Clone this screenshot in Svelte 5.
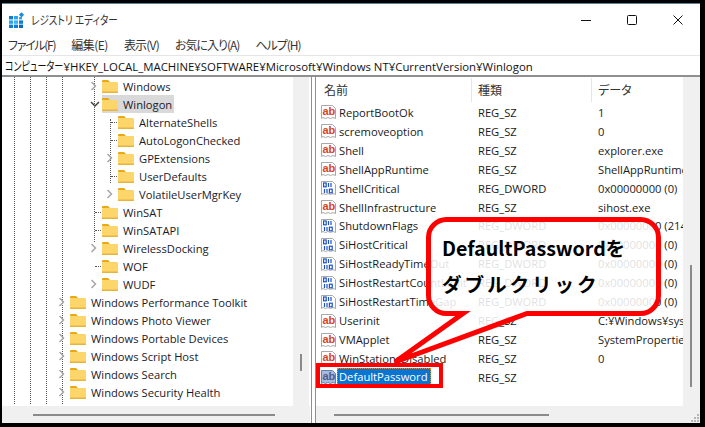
<script>
  // track = letter-spacing per item, Meiryo UI kana are narrow
  const menu = [
    { label: "ファイル(F)", track: -1.3 },
    { label: "編集(E)", track: -0.5 },
    { label: "表示(V)", track: -0.8 },
    { label: "お気に入り(A)", track: -1 },
    { label: "ヘルプ(H)", track: -1 }
  ];

  const tree = [
    { level: 2, name: "Windows", arrow: "right" },
    { level: 2, name: "Winlogon", arrow: "down", selected: true },
    { level: 3, name: "AlternateShells", dots: true },
    { level: 3, name: "AutoLogonChecked", dots: true },
    { level: 3, name: "GPExtensions", arrow: "right" },
    { level: 3, name: "UserDefaults", dots: true },
    { level: 3, name: "VolatileUserMgrKey", arrow: "right" },
    { level: 2, name: "WinSAT", dots: true },
    { level: 2, name: "WinSATAPI", dots: true },
    { level: 2, name: "WirelessDocking", arrow: "right" },
    { level: 2, name: "WOF", dots: true },
    { level: 2, name: "WUDF", arrow: "right" },
    { level: 1, name: "Windows Performance Toolkit", arrow: "right" },
    { level: 1, name: "Windows Photo Viewer", arrow: "right" },
    { level: 1, name: "Windows Portable Devices", arrow: "right" },
    { level: 1, name: "Windows Script Host", arrow: "right" },
    { level: 1, name: "Windows Search", arrow: "right" },
    { level: 1, name: "Windows Security Health", arrow: "right" }
  ];

  const values = [
    ["ReportBootOk", "REG_SZ", "1", "ab"],
    ["scremoveoption", "REG_SZ", "0", "ab"],
    ["Shell", "REG_SZ", "explorer.exe", "ab"],
    ["ShellAppRuntime", "REG_SZ", "ShellAppRuntime.exe", "ab"],
    ["ShellCritical", "REG_DWORD", "0x00000000 (0)", "bin"],
    ["ShellInfrastructure", "REG_SZ", "sihost.exe", "ab"],
    ["ShutdownFlags", "REG_DWORD", "0x00000000 (214", "bin"],
    ["SiHostCritical", "REG_DWORD", "0x00000000 (0)", "bin"],
    ["SiHostReadyTimeOut", "REG_DWORD", "0x00000000 (0)", "bin"],
    ["SiHostRestartCountLimit", "REG_DWORD", "0x00000000 (0)", "bin"],
    ["SiHostRestartTimeGap", "REG_DWORD", "0x00000000 (0)", "bin"],
    ["Userinit", "REG_SZ", "C:¥Windows¥system32", "ab"],
    ["VMApplet", "REG_SZ", "SystemPropertiesPerf", "ab"],
    ["WinStationsDisabled", "REG_SZ", "0", "ab"],
    ["DefaultPassword", "REG_SZ", "", "ab", true]
  ];
</script>

<div class="frame">
  <div class="window">
    <header class="titlebar">
      <svg class="appicon" width="16" height="16" viewBox="0 0 16 16">
        <g>
          <rect x="0" y="4" width="4" height="3.4" fill="#0e7fd0" />
          <rect x="5" y="4" width="4" height="3.4" fill="#2aa4ea" />
          <rect x="10" y="5" width="3" height="2.4" fill="#2aa4ea" />
          <rect x="0" y="8.4" width="4" height="3.4" fill="#2aa4ea" />
          <rect x="5" y="8.4" width="4" height="3.4" fill="#38b4f0" />
          <rect x="10" y="8.4" width="4" height="3.4" fill="#0e7fd0" />
          <rect x="0" y="12.6" width="4" height="3.4" fill="#0e7fd0" />
          <rect x="5" y="12.6" width="4" height="3.4" fill="#0e7fd0" />
          <rect x="10" y="12.6" width="4" height="3.4" fill="#0a6cb8" />
        </g>
        <path d="M12.5 0.2l2.6 2.6-2.6 2.6-2.6-2.6z" fill="#1a8fd8" />
      </svg>
      <span class="apptitle">レジストリ エディター</span>
      <div class="controls">
        <svg width="12" height="12" viewBox="0 0 12 12"><path d="M1 6.5h10" stroke="#111" fill="none" /></svg>
        <svg width="12" height="12" viewBox="0 0 12 12"><rect x="1.5" y="1.5" width="9" height="9" rx="1" stroke="#111" fill="none" /></svg>
        <svg width="12" height="12" viewBox="0 0 12 12"><path d="M1.5 1.5l9 9M10.5 1.5l-9 9" stroke="#111" fill="none" /></svg>
      </div>
    </header>

    <nav class="menu">
      {#each menu as item}
        <span style="letter-spacing: {item.track}px">{item.label}</span>
      {/each}
    </nav>

    <div class="address"><span class="ja">コンピューター</span>¥HKEY_LOCAL_MACHINE¥SOFTWARE¥Microsoft¥Windows NT¥CurrentVersion¥Winlogon</div>

    <div class="panes">
      <section class="treepane">
        <div class="treeview">
          <div class="guides">
            <i></i><i></i><i></i><i></i><i></i><i></i>
          </div>
          <ul class="tree">
            {#each tree as node}
              <li class="node" class:l2={node.level === 2} class:l3={node.level === 3}>
                <span class="twist">
                  {#if node.arrow === "right"}
                    <svg width="8" height="10" viewBox="0 0 8 10"><path d="M1.5 1l4 4-4 4" stroke="#a6a6a6" stroke-width="1.5" fill="none" /></svg>
                  {:else if node.arrow === "down"}
                    <svg width="10" height="8" viewBox="0 0 10 8"><path d="M1 2l4 4 4-4" stroke="#404040" stroke-width="1.5" fill="none" /></svg>
                  {:else if node.dots}
                    <b class="dotline"></b>
                  {/if}
                </span>
                <span class="label" class:selected={node.selected}>
                  <svg class="folder" width="16" height="14" viewBox="0 0 16 14">
                    <path d="M0 2a1 1 0 0 1 1-1h5l2 2H0z" fill="#e9a80f" />
                    <rect x="0" y="3" width="16" height="11" rx="1" fill="#fcd56b" />
                    <rect x="0" y="12.5" width="16" height="1.5" fill="#e8b53c" />
                  </svg>
                  <span class="text">{node.name}</span>
                </span>
              </li>
            {/each}
          </ul>
          <div class="vscroll"><b></b></div>
        </div>
        <div class="hscroll tree-h"><b></b></div>
      </section>

      <section class="listpane">
        <div class="listview">
          <div class="head">
            <span>名前</span><span>種類</span><span>データ</span>
          </div>
          {#each values as v}
            <div class="row">
              <span class="cname">
                <svg class="ficon" class:dim={v[4]} width="16" height="16" viewBox="0 0 16 16">
                  <path class="page" d="M0.5 1.5h11l3 3v10l-2.500-1-2.500 1-2.500-1-2.500 1-2.500-1-1.500 1z" />
                  {#if v[3] === "ab"}
                    <text x="1.500" y="10.500" class="abtext">ab</text>
                  {:else}
                    <g fill="none" stroke="#1c50c8" stroke-width="1.200">
                      <rect x="2.600" y="3" width="2.600" height="3.800" />
                      <path d="M7.500 3v4M10 3v4" />
                      <path d="M3.500 9v4M6 9v4" />
                      <rect x="8.400" y="9.200" width="2.800" height="3.600" />
                    </g>
                  {/if}
                </svg>
                <span class="vname" class:active={v[4]}>{v[0]}</span>
              </span>
              <span class="ctype">{v[1]}</span>
              <span class="cdata">{v[2]}</span>
            </div>
          {/each}
          <div class="vscroll list-v"><b></b></div>
        </div>
        <div class="hscroll list-h"><b></b><svg class="grip" width="10" height="10" viewBox="0 0 10 10" fill="#b5b5b5"><rect x="7" y="1" width="2" height="2"/><rect x="4" y="4" width="2" height="2"/><rect x="7" y="4" width="2" height="2"/><rect x="1" y="7" width="2" height="2"/><rect x="4" y="7" width="2" height="2"/><rect x="7" y="7" width="2" height="2"/></svg></div>
      </section>
    </div>

    <!-- annotation drawn over the screenshot -->
    <svg class="callout" width="705" height="427" viewBox="0 0 705 427">
      <path d="M446.500 219.500H640.500a18 18 0 0 1 18 18V295.500a18 18 0 0 1-18 18H527L395 362L463 313.500H446.500a18 18 0 0 1-18-18V237.500a18 18 0 0 1 18-18Z" fill="#fff" fill-opacity="0.86" stroke="#ff0000" stroke-width="5" />
    </svg>
    <div class="bubble">
      <p>DefaultPasswordを</p>
      <p class="kana">ダブルクリック</p>
    </div>
    <div class="redbox"></div>
  </div>
</div>

<style>
  :global(body) {
    margin: 0;
    background: #000;
  }

  .frame {
    width: 705px;
    height: 427px;
    box-sizing: border-box;
    padding: 3px 5px 5px 2px;
    background: #000;
    overflow: hidden;
  }

  .window {
    position: relative;
    height: 100%;
    display: flex;
    flex-direction: column;
    background: #fff;
    font-family: "Noto Sans CJK JP", "Noto Sans", sans-serif;
    font-feature-settings: "palt";
    font-size: 12px;
    color: #1a1a1a;
    border-top: 1px solid #5f7f92;
  }

  .titlebar {
    height: 31px;
    flex: none;
    display: flex;
    align-items: center;
    padding: 0 0 0 7px;
    box-sizing: border-box;
  }

  .appicon {
    margin-right: 6px;
  }

  .apptitle {
    font-size: 12px;
    color: #333;
    transform: scaleX(0.8);
    transform-origin: left center;
  }

  .controls {
    margin-left: auto;
    display: flex;
    gap: 34px;
    padding-right: 16px;
    align-items: center;
  }

  .controls svg {
    display: block;
  }

  .menu {
    flex: none;
    height: 20px;
    display: flex;
    gap: 16px;
    align-items: center;
    padding: 0 0 1px 6px;
    box-sizing: border-box;
    color: #333;
  }

  .address {
    flex: none;
    height: 20px;
    line-height: 20px;
    box-sizing: border-box;
    border-top: 1px solid #e6e6e6;
    padding-left: 3px;
    font-family: "Open Sans", "Noto Sans CJK JP", sans-serif;
    font-size: 11.400px;
    white-space: nowrap;
    overflow: hidden;
    color: #111;
  }

  .address .ja {
    display: inline-block;
    font-family: "Noto Sans CJK JP", sans-serif;
    font-size: 12px;
    transform: scaleX(0.75);
    transform-origin: left center;
    margin-right: -19px;
  }

  .panes {
    flex: 1;
    min-height: 0;
    display: flex;
    border-top: 2px solid #8f8f8f;
  }

  .treepane {
    width: 309px;
    flex: none;
    display: flex;
    flex-direction: column;
    border-right: 1px solid #8f8f8f;
  }

  .listpane {
    flex: 1;
    min-width: 0;
    display: flex;
    flex-direction: column;
    margin-left: 3px;
    border-left: 1px solid #8f8f8f;
  }

  .treeview,
  .listview {
    position: relative;
    flex: 1;
    min-height: 0;
    overflow: hidden;
    background: #fff;
  }

  .guides i {
    position: absolute;
    top: 0;
    bottom: 2px;
    border-left: 1px dotted #555;
  }

  .guides i:nth-child(1) { left: 12px; }
  .guides i:nth-child(2) { left: 28px; }
  .guides i:nth-child(3) { left: 44px; }
  .guides i:nth-child(4) { left: 60px; }
  .guides i:nth-child(5) { left: 92px; bottom: auto; height: 165px; }
  .guides i:nth-child(6) { left: 108px; top: 42px; bottom: auto; height: 64px; }

  .tree {
    position: relative;
    list-style: none;
    margin: 0;
    padding: 0 0 0 56px;
    font-family: "Open Sans", "Noto Sans", sans-serif;
    font-size: 11.200px;
  }

  .node {
    height: 18px;
    display: flex;
    align-items: center;
  }

  .node.l2 { padding-left: 32px; }
  .node.l3 { padding-left: 48px; }

  .twist {
    width: 11px;
    margin-right: 1px;
    flex: none;
    display: flex;
    align-items: center;
  }

  .twist svg {
    display: block;
  }

  .dotline {
    display: block;
    width: 6px;
    margin-left: 5px;
    border-top: 1px dotted #555;
  }

  .label {
    display: flex;
    align-items: center;
    gap: 5px;
    height: 18px;
    padding-right: 2px;
  }

  .label.selected {
    background: #d9d9d9;
  }

  .folder {
    flex: none;
  }

  .text {
    white-space: nowrap;
    color: #1a1a2a;
  }

  .treeview .vscroll {
    position: absolute;
    top: 0;
    right: 2px;
    bottom: 0;
    width: 16px;
    background: #f0f0f0;
  }

  .vscroll b {
    position: absolute;
    left: 7px;
    width: 2px;
    background: #8a8a8a;
  }

  .treeview .vscroll b {
    top: 277px;
    height: 17px;
  }

  .hscroll {
    position: relative;
    flex: none;
    height: 17px;
    background: #f0f0f0;
  }

  .hscroll b {
    position: absolute;
    top: 8px;
    height: 2px;
    background: #8a8a8a;
  }

  .tree-h {
    margin-right: 1px;
  }

  .tree-h b {
    left: 31px;
    width: 242px;
  }

  .list-h b {
    left: 18px;
    width: 215px;
  }

  .grip {
    position: absolute;
    right: 0;
    bottom: 0;
  }

  .head {
    display: grid;
    grid-template-columns: 155px 120px 1fr;
    height: 26px;
    align-items: center;
    color: #333;
  }

  .head span {
    padding-left: 6px;
    height: 24px;
    line-height: 24px;
    border-left: 1px solid #e5e5e5;
  }

  .head span:first-child {
    border-left: 0;
    padding-left: 8px;
  }

  .row {
    display: grid;
    grid-template-columns: 155px 120px 1fr;
    height: 18.930px;
    align-items: center;
    font-family: "Open Sans", "Noto Sans", sans-serif;
    font-size: 11.200px;
    white-space: nowrap;
    overflow: hidden;
    padding-right: 17px;
  }

  .row span {
    overflow: hidden;
  }

  .cname {
    display: flex;
    align-items: center;
    padding-left: 5px;
    gap: 2px;
  }

  .ficon {
    flex: none;
  }

  .page {
    fill: #fff;
    stroke: #a8a8a8;
  }

  .ficon.dim .page {
    fill: #a9bbd9;
    stroke: #5f7fb8;
  }

  .abtext {
    font-family: "Liberation Sans", sans-serif;
    font-size: 11px;
    font-weight: 700;
    fill: #d8431f;
  }

  .ficon.dim .abtext {
    fill: #4f5a8f;
  }

  .vname.active {
    display: block;
    height: 18px;
    line-height: 18px;
    margin-left: -2px;
    padding: 0 4px 0 2px;
    background: #0a74d0;
    color: #fff;
    outline: 1px dotted #e09020;
    outline-offset: -1px;
  }

  .ctype,
  .cdata {
    padding-left: 7px;
  }

  .listview .vscroll {
    position: absolute;
    top: 0;
    right: 0;
    bottom: 0;
    width: 17px;
    background: #f0f0f0;
  }

  .list-v b {
    top: 188px;
    height: 122px;
  }

  .callout {
    position: absolute;
    left: -2px;
    top: -4px;
    pointer-events: none;
  }

  .bubble {
    position: absolute;
    left: 440px;
    top: 226px;
    font-weight: 700;
    font-size: 19.600px;
    color: #000;
    white-space: nowrap;
  }

  .bubble p {
    margin: 0;
    line-height: 36px;
  }

  .bubble .kana {
    font-feature-settings: normal;
    letter-spacing: 2.900px;
  }

  .redbox {
    position: absolute;
    left: 314px;
    top: 359px;
    width: 127px;
    height: 25px;
    border: 4px solid #ff0000;
    box-sizing: border-box;
  }
</style>
